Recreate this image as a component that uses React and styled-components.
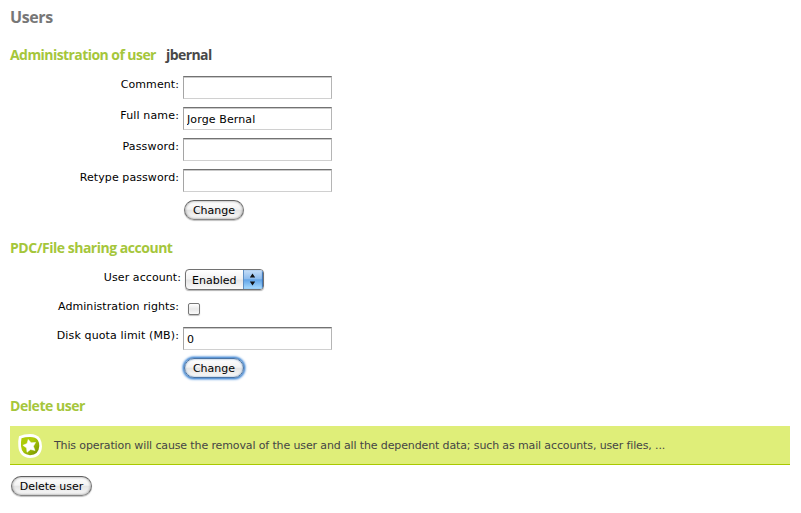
import React from "react";
import styled, { createGlobalStyle, css } from "styled-components";

const GlobalStyle = createGlobalStyle`
  * { box-sizing: border-box; }
  body {
    margin: 0;
    background: #fff;
    color: #000;
    font-family: Verdana, "DejaVu Sans", sans-serif;
    font-size: 11px;
  }
`;

const Page = styled.main`
  display: flex;
  flex-direction: column;
  width: 801px;
  height: 513px;
  padding: 7px 11px 0 10px;
  overflow: hidden;
`;

const headingFont = css`
  margin: 0;
  font-family: "Trebuchet MS", "Open Sans", sans-serif;
  font-weight: 700;
  height: 20px;
  line-height: 20px;
  white-space: nowrap;
`;

const PageTitle = styled.h2`
  ${headingFont}
  color: #777;
  font-size: 16px;
  letter-spacing: -0.4px;
`;

const SectionTitle = styled.h3`
  ${headingFont}
  display: flex;
  gap: 10px;
  color: #a5c63b;
  font-size: 14px;
  letter-spacing: ${(p) => p.$tracking}px;
  margin-top: ${(p) => p.$top}px;
`;

const UserName = styled.span`
  color: #484848;
`;

const Form = styled.form`
  display: flex;
  flex-direction: column;
  margin-top: ${(p) => p.$top}px;
`;

const Row = styled.div`
  display: flex;
  align-items: flex-start;
  height: ${(p) => p.$height || 31}px;
`;

const Label = styled.label`
  width: ${(p) => p.$width || 169}px;
  flex: none;
  padding-top: 1px;
  line-height: 16px;
  text-align: right;
  white-space: nowrap;
  letter-spacing: ${(p) => p.$tracking || 0.08}px;
`;

const TextInput = styled.input`
  width: 149px;
  height: 23px;
  margin: 0 0 0 4px;
  padding: 2px 3px 0;
  border: 1px solid;
  border-color: #727272 #b5b5b5 #d0d0d0 #a5a5a5;
  border-radius: 0;
  background: #fff;
  box-shadow: inset 0 1px 0 #c9c9c9;
  color: #000;
  font: inherit;
  letter-spacing: 0.12px;
  outline: none;
`;

const Button = styled.button`
  width: ${(p) => p.$width || 60}px;
  height: 20px;
  margin: 0 0 0 ${(p) => p.$left}px;
  padding: 1px 0 0;
  border: 1px solid;
  border-color: #606060 #737373 #858585;
  border-radius: 10px;
  background: linear-gradient(#fff 0%, #f3f3f3 45%, #e4e4e4 52%, #fafafa 100%);
  box-shadow: ${(p) =>
    p.$focused
      ? "0 0 1px 1px #5b96d6, 0 0 2px 2px #8db8e8, inset 0 0 2px #6d94c1"
      : "0 1px 1px rgba(0,0,0,.25), inset 0 0 2px 1px rgba(0,0,0,.22)"};
  ${(p) => p.$focused && "border-color: #4a73a3;"}
  color: #000;
  font: inherit;
  line-height: 18px;
  white-space: nowrap;
`;

const SelectBox = styled.button`
  display: flex;
  width: 79px;
  height: 21px;
  margin: 0 0 0 4px;
  padding: 0;
  overflow: hidden;
  border: 1px solid #727272;
  border-radius: 4px;
  background: linear-gradient(#fff 0%, #f2f2f2 48%, #e4e4e4 52%, #fafafa 100%);
  box-shadow: 0 1px 1px rgba(0, 0, 0, 0.3);
  color: #000;
  font: inherit;
`;

const SelectValue = styled.span`
  flex: 1;
  padding: 1px 0 0 6px;
  line-height: 19px;
  text-align: left;
`;

const SelectArrows = styled.span`
  display: flex;
  align-items: center;
  justify-content: center;
  width: 20px;
  height: 19px;
  padding-right: 2px;
  border-left: 1px solid #5e8fc4;
  background: linear-gradient(#c7def7 0%, #8fbdee 45%, #62a4e6 52%, #a9dcff 100%);
  box-shadow: inset -1px 0 1px #3b72b4;
`;

const Checkbox = styled.input`
  appearance: none;
  width: 12px;
  height: 12px;
  margin: 5px 0 0 9px;
  border: 1px solid #777;
  border-radius: 2px;
  background: linear-gradient(#fff, #e8e8e8 50%, #fafafa);
  box-shadow: 0 1px 1px rgba(0, 0, 0, 0.25);
`;

const Notice = styled.div`
  display: flex;
  align-items: center;
  gap: 11px;
  height: 39px;
  margin: 10px 0 11px;
  padding: 1px 0 0 7px;
  border-bottom: 1px solid #a9c800;
  background: #dfee79;
  color: #454545;
  white-space: nowrap;
`;

const NoticeText = styled.span`
  line-height: 16px;
  letter-spacing: -0.128px;
`;

const Arrows = () => (
  <svg width="7" height="13" viewBox="0 0 7 13">
    <path d="M3.5 0.5L6.2 4.5H.8ZM3.5 12.5L.8 8.5H6.2Z" fill="#111" />
  </svg>
);

const StarBadge = () => (
  <svg width="26" height="26" viewBox="0 0 26 26">
    <defs>
      <linearGradient id="badge" x1="0" y1="0" x2="1" y2="1">
        <stop offset="0.4" stopColor="#adcb08" />
        <stop offset="0.9" stopColor="#7a9800" />
      </linearGradient>
    </defs>
    <path
      d="M2 3.2Q7 .9 13 .9Q20 .9 23 5.5Q25 9 25 13.2Q24.5 24.7 13 25Q2.2 24.5 1.3 13Q1 7 2 3.2Z"
      fill="#fff"
    />
    <path
      d="M4.5 5.2Q8.5 3.8 13 3.9Q18.5 3.8 20.9 7.2Q22.3 9.5 22.3 13Q21.8 21.8 13 22.2Q4.7 21.5 4 13Q3.9 8 4.5 5.2Z"
      fill="url(#badge)"
    />
    <path
      d="M11.2 6.4L14.1 9.8L18.6 9.4L16.4 13.3L18 17.5L13.6 16.5L10 19.3L9.6 14.9L5.9 12.3L10.1 10.6Z"
      fill="#fff"
      stroke="#fff"
      strokeWidth="0.5"
    />
  </svg>
);

export default function App() {
  return (
    <>
      <GlobalStyle />
      <Page>
        <PageTitle>Users</PageTitle>

        <SectionTitle $top={18} $tracking={-0.56}>
          <span>Administration of user</span>
          <UserName>jbernal</UserName>
        </SectionTitle>
        <Form $top={11}>
          <Row>
            <Label htmlFor="comment">Comment:</Label>
            <TextInput id="comment" />
          </Row>
          <Row>
            <Label htmlFor="fullname" $tracking={0.15}>Full name:</Label>
            <TextInput id="fullname" defaultValue="Jorge Bernal" />
          </Row>
          <Row>
            <Label htmlFor="password" $tracking={0.15}>Password:</Label>
            <TextInput id="password" type="password" />
          </Row>
          <Row>
            <Label htmlFor="retype">Retype password:</Label>
            <TextInput id="retype" type="password" />
          </Row>
          <Row $height={38}>
            <Button type="button" $left={174}>Change</Button>
          </Row>
        </Form>

        <SectionTitle $top={0} $tracking={-0.48}>PDC/File sharing account</SectionTitle>
        <Form $top={11}>
          <Row $height={29}>
            <Label $width={171}>User account:</Label>
            <SelectBox type="button">
              <SelectValue>Enabled</SelectValue>
              <SelectArrows><Arrows /></SelectArrows>
            </SelectBox>
          </Row>
          <Row $height={29}>
            <Label htmlFor="admin">Administration rights:</Label>
            <Checkbox id="admin" type="checkbox" />
          </Row>
          <Row>
            <Label htmlFor="quota" $tracking={0.13}>Disk quota limit (MB):</Label>
            <TextInput id="quota" defaultValue="0" />
          </Row>
          <Row $height={38}>
            <Button type="button" $left={174} $focused>Change</Button>
          </Row>
        </Form>

        <SectionTitle $top={0} $tracking={-0.45}>Delete user</SectionTitle>
        <Notice>
          <StarBadge />
          <NoticeText>
            This operation will cause the removal of the user and all the dependent data; such as mail accounts, user files, ...
          </NoticeText>
        </Notice>
        <Button type="button" $left={1} $width={81}>Delete user</Button>
      </Page>
    </>
  );
}
